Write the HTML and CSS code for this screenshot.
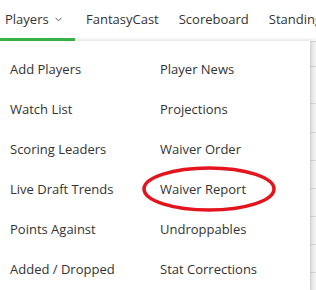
FILE: index.html
```html
<!DOCTYPE html>
<html>
<head>
<meta charset="utf-8">
<link rel="stylesheet" href="styles.css">
</head>
<body>
<div class="page">
  <nav class="tabs">
    <div class="tab active">Players<svg class="chev" width="7" height="5" viewBox="0 0 7 5"><path d="M0.5 0.8 L3.5 3.8 L6.5 0.8" fill="none" stroke="#555" stroke-width="1"/></svg></div>
    <div class="tab">FantasyCast</div>
    <div class="tab">Scoreboard</div>
    <div class="tab">Standings</div>
  </nav>
  <div class="backdrop">
    <div class="brow r1"></div>
    <div class="brow r2"></div>
    <div class="brow r3"></div>
    <div class="brow r4"></div>
    <div class="brow r4"></div>
    <div class="brow r4"></div>
    <div class="brow r4"></div>
    <div class="brow r4"></div>
    <div class="brow r4"></div>
  </div>
  <div class="menu">
    <div class="grid">
      <a class="item">Add Players</a>
      <a class="item">Player News</a>
      <a class="item">Watch List</a>
      <a class="item">Projections</a>
      <a class="item">Scoring Leaders</a>
      <a class="item">Waiver Order</a>
      <a class="item">Live Draft Trends</a>
      <a class="item">Waiver Report</a>
      <a class="item">Points Against</a>
      <a class="item">Undroppables</a>
      <a class="item">Added / Dropped</a>
      <a class="item">Stat Corrections</a>
    </div>
    <svg class="circle" width="140" height="50" viewBox="0 0 140 50"><ellipse cx="69" cy="24" rx="65" ry="21" fill="none" stroke="#e3141d" stroke-width="3.5"/></svg>
  </div>
</div>
</body>
</html>
```
FILE: styles.css
```css
* { box-sizing: border-box; }
html, body { margin: 0; padding: 0; background: #fff; }
body {
  font-family: "Open Sans", "Liberation Sans", sans-serif;
  font-size: 13px;
  color: #333;
}
.page {
  position: relative;
  width: 316px;
  height: 290px;
  overflow: hidden;
}
.tabs {
  display: flex;
  height: 41px;
  border-bottom: 3px solid #f6f6f6;
  white-space: nowrap;
}
.tab {
  display: flex;
  align-items: center;
  height: 41px;
  padding: 0 10px 3px;
  color: #333;
  flex: none;
}
.tab.active {
  width: 75px;
  padding-left: 5px;
  border-bottom: 3px solid #3ab54a;
  padding-bottom: 0;
  height: 41px;
  margin-right: 1px;
}
.chev { margin-left: 6px; margin-top: 1px; }
.backdrop {
  margin-left: 310px;
  background: linear-gradient(90deg, #e6e6e6, #f3f3f3);
  border-top: 1px solid #d0d0d0;
  height: 260px;
}
.brow { border-bottom: 1px solid #d4d4d4; }
.r1 { height: 25px; }
.r2 { height: 37px; }
.r3 { height: 29px; }
.r4 { height: 28px; }
.menu {
  position: absolute;
  top: 41px;
  left: 0;
  width: 310px;
  height: 260px;
  background: #fff;
  padding-top: 8px;
  box-shadow: 1px 0 3px rgba(0,0,0,0.12);
}
.grid {
  display: grid;
  grid-template-columns: 150px 150px;
  grid-auto-rows: 40px;
}
.item {
  display: flex;
  align-items: center;
  padding-left: 10px;
  color: #333;
  white-space: nowrap;
}
.circle {
  position: absolute;
  left: 140px;
  top: 124px;
}
```
